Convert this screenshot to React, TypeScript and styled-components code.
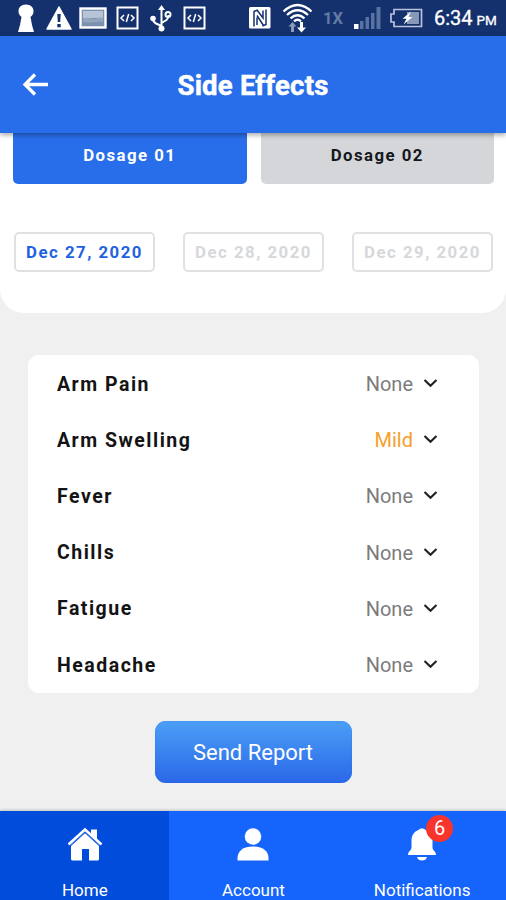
import React from "react";
import styled, { createGlobalStyle } from "styled-components";

const GlobalStyle = createGlobalStyle`
  * { box-sizing: border-box; }
  body { margin: 0; background: #f0f0f0; }
  button { font: inherit; border: 0; padding: 0; margin: 0; cursor: pointer; }
`;

const Screen = styled.div`
  width: 506px;
  height: 900px;
  overflow: hidden;
  display: flex;
  flex-direction: column;
  background: #f0f0f0;
  font-family: Roboto, "Liberation Sans", sans-serif;
`;

const StatusBar = styled.div`
  flex: none;
  height: 36px;
  background: #14316d;
  color: #fff;
  display: flex;
  justify-content: space-between;
  padding: 0 10px 0 16px;
`;

const StatusGroup = styled.div`
  display: flex;
  align-items: center;
  height: 36px;
`;

const StatusIcon = styled.svg<{ $gap?: number }>`
  display: block;
  flex: none;
  margin-right: ${(p) => p.$gap ?? 0}px;
`;

const Network = styled.span`
  width: 31px;
  font-size: 16.5px;
  font-weight: 700;
  color: #647aa3;
`;

const Clock = styled.span`
  width: 62px;
  font-size: 20px;
  line-height: 36px;
  white-space: nowrap;
  padding-top: 2px;
  -webkit-text-stroke: 0.3px #fff;
`;

const Meridiem = styled.small`
  font-size: 13.5px;
  margin-left: 4px;
`;

const Header = styled.header`
  flex: none;
  position: relative;
  z-index: 1;
  height: 97px;
  background: #286eeb;
  box-shadow: 0 2px 5px rgba(0, 0, 0, 0.35);
  display: grid;
  grid-template-columns: 72px 1fr 72px;
  align-items: center;
`;

const BackButton = styled.button`
  background: none;
  color: #fff;
  display: flex;
  padding-left: 22px;
`;

const Title = styled.h1`
  margin: 2px 0 0;
  color: #fff;
  text-align: center;
  font-size: 27.5px;
  line-height: 32px;
  font-weight: 700;
  letter-spacing: 0.2px;
  -webkit-text-stroke: 0.5px #fff;
`;

const Panel = styled.section`
  flex: none;
  height: 180px;
  background: #fff;
  border-radius: 0 0 24px 24px;
  padding: 0 12px 0 13px;
`;

const Tabs = styled.div`
  display: grid;
  grid-template-columns: 1fr 1fr;
  gap: 14px;
`;

const Tab = styled.button<{ $active?: boolean }>`
  height: 51px;
  padding-bottom: 8px;
  border-radius: 0 0 5px 5px;
  background: ${(p) => (p.$active ? "#286eeb" : "#d4d6d9")};
  color: ${(p) => (p.$active ? "#fff" : "#15171b")};
  font-size: 16.8px;
  font-weight: 700;
  letter-spacing: 1.45px;
`;

const Dates = styled.div`
  display: flex;
  justify-content: space-between;
  margin: 48px 1px 0;
`;

const DateChip = styled.button<{ $active?: boolean }>`
  width: 141px;
  height: 40px;
  background: #fff;
  border: 2px solid #e0e1e3;
  border-radius: 5px;
  color: ${(p) => (p.$active ? "#1f62e0" : "#d6d8db")};
  font-size: 16.8px;
  font-weight: 700;
  letter-spacing: 1.5px;
  white-space: nowrap;
`;

const Card = styled.section`
  flex: none;
  margin: 42px 27px 0 28px;
  height: 338px;
  background: #fff;
  border-radius: 11px;
  padding: 1px 41px 0 29px;
`;

const Row = styled.div`
  height: 56.2px;
  display: flex;
  align-items: center;
  justify-content: space-between;
`;

const Symptom = styled.span`
  font-size: 19.5px;
  font-weight: 700;
  letter-spacing: 1.5px;
  color: #141414;
`;

const Severity = styled.button<{ $mild?: boolean }>`
  display: flex;
  align-items: center;
  gap: 10px;
  background: none;
  font-size: 20px;
  color: ${(p) => (p.$mild ? "#f5a02c" : "#7c7c7c")};
`;

const SendButton = styled.button`
  flex: none;
  align-self: center;
  width: 197px;
  height: 62px;
  margin-top: 28px;
  border-radius: 11px;
  background: linear-gradient(#4b9ff6, #2a67e8);
  color: #fff;
  font-size: 22px;
  box-shadow: inset 0 0 1px #1c68ea;
`;

const BottomNav = styled.nav`
  flex: none;
  height: 89px;
  margin-top: auto;
  display: grid;
  grid-template-columns: repeat(3, 1fr);
  box-shadow: 0 -1px 3px rgba(0, 0, 0, 0.2);
`;

const NavItem = styled.button<{ $active?: boolean }>`
  background: ${(p) => (p.$active ? "#024cdb" : "#1564fc")};
  color: #fff;
  display: flex;
  flex-direction: column;
  align-items: center;
  padding: 15px 0 0 1px;
  font-size: 17px;
`;

const NavIcon = styled.div`
  position: relative;
  width: 38px;
  height: 36px;
  margin-bottom: 18px;
`;

const NavLabel = styled.span`
  line-height: 20px;
`;

const Badge = styled.span`
  position: absolute;
  left: 23px;
  top: -11px;
  width: 27px;
  height: 27px;
  border-radius: 50%;
  background: #f8352d;
  font-size: 20px;
  line-height: 26px;
  text-align: center;
`;

const CodeIcon = ({ gap }: { gap?: number }) => (
  <StatusIcon width="23" height="24" viewBox="0 0 23 24" fill="none" stroke="#fff" $gap={gap}>
    <rect x="1.5" y="1.5" width="20" height="21" strokeWidth="2" />
    <path d="M8 9L5 12l3 3M15 9l3 3-3 3M12.7 8l-2.4 8" strokeWidth="1.5" />
  </StatusIcon>
);

const Chevron = () => (
  <svg width="15" height="10" viewBox="0 0 15 10" fill="none" stroke="#222" strokeWidth="2.2">
    <path d="M1.5 1l6 5.700 6-5.700" />
  </svg>
);

const symptoms = [
  { name: "Arm Pain", level: "None" },
  { name: "Arm Swelling", level: "Mild" },
  { name: "Fever", level: "None" },
  { name: "Chills", level: "None" },
  { name: "Fatigue", level: "None" },
  { name: "Headache", level: "None" },
];

export default function App() {
  return (
    <>
      <GlobalStyle />
      <Screen>
        <StatusBar>
          <StatusGroup>
            <StatusIcon width="20" height="30" viewBox="0 0 20 30" fill="#fff" $gap={9}>
              <path d="M10 1.500c5 0 7.500 3 7.500 6.500 0 3-1 4-3 6l1.500 8 2 7H2l2-7 1.500-8c-2-2-3-3-3-6 0-3.500 2.500-6.500 7.500-6.500z" />
            </StatusIcon>
            <StatusIcon width="28" height="26" viewBox="0 0 28 26" $gap={6}>
              <path d="M14 2L26 24H2z" fill="#fff" stroke="#fff" strokeWidth="1.500" strokeLinejoin="round" />
              <path d="M12.300 9h3.400l-.5 8h-2.400zM12.300 19h3.400v3.200h-3.400z" fill="#14316d" />
            </StatusIcon>
            <StatusIcon width="28" height="22" viewBox="0 0 28 22" $gap={9}>
              <rect x="1.500" y="1.500" width="25" height="19" fill="#7b91ae" stroke="#fff" strokeWidth="2.400" />
              <rect x="4" y="4" width="20" height="7" fill="#b7c4d6" />
              <path d="M4 12c5-3 8 1 12 0s5-2 8-1v4c-6-1-12 2-20 0z" fill="#93a5bd" />
            </StatusIcon>
            <CodeIcon gap={11} />
            <StatusIcon width="22" height="28" viewBox="0 0 22 28" fill="none" stroke="#fff" strokeWidth="2" $gap={11}>
              <path d="M11.500 5v20M11.500 22L6 19.500Q3 18 3 14M11.500 19l5-3q2-1.500 2-5" />
              <path d="M11.500 1l3.500 5H8z" fill="#fff" stroke="none" />
              <circle cx="3" cy="14.500" r="2.800" fill="#fff" stroke="none" />
              <circle cx="18" cy="10.500" r="2.500" />
              <circle cx="11.500" cy="24.500" r="3" fill="#fff" stroke="none" />
            </StatusIcon>
            <CodeIcon />
          </StatusGroup>
          <StatusGroup>
            <StatusIcon width="22" height="22" viewBox="0 0 22 22" $gap={11}>
              <rect width="21.500" height="21.500" rx="1.500" fill="#fff" />
              <path d="M5 19.500V4.500L8.500 3M17 2.500v15L13.500 19" fill="none" stroke="#14316d" strokeWidth="1.500" />
              <path d="M8 3l6 8V3.500M8 10.500V18M8 8.500l6.500 10" fill="none" stroke="#14316d" strokeWidth="1.500" />
            </StatusIcon>
            <StatusIcon width="31" height="30" viewBox="0 0 31 30" fill="none" stroke="#fff" strokeWidth="2.300" $gap={10}>
              <path d="M1.500 8.500Q15.500-4.500 29.500 8.500M5 12q10.500-9.500 21 0M8.500 15.300q7-6 14 0M12 18.300q3.500-3 7 0" />
              <path d="M10.500 19l4 4.500H12V29H9v-5.500H6.500z" fill="#8c9bb8" stroke="none" />
              <path d="M19.500 29.500l-4.500-5h3V19h3v5.500h3z" fill="#fff" stroke="none" />
            </StatusIcon>
            <Network>1X</Network>
            <StatusIcon width="28" height="22" viewBox="0 0 28 22" fill="#5873a1" $gap={7}>
              <rect x="0" y="17" width="4.500" height="5" fill="#fff" />
              <rect x="6" y="14" width="3.500" height="8" />
              <rect x="11.500" y="10" width="3.500" height="12" />
              <rect x="17" y="6" width="3.500" height="16" />
              <rect x="22.500" y="0" width="4" height="22" />
            </StatusIcon>
            <StatusIcon width="34" height="20" viewBox="0 0 34 20" $gap={11}>
              <path d="M5 1.500h27.500v17H5V14H2V6h3z" fill="none" stroke="#b9c4d9" strokeWidth="1.700" />
              <rect x="18" y="4" width="12" height="12" fill="#8798b8" />
              <path d="M22 3.500l-8.500 7.300h4L14.500 16.500l9-7.500h-4z" fill="#fff" />
            </StatusIcon>
            <Clock>
              6:34<Meridiem>PM</Meridiem>
            </Clock>
          </StatusGroup>
        </StatusBar>
        <Header>
          <BackButton aria-label="Back">
            <svg width="27" height="24" viewBox="0 0 27 24" fill="none" stroke="#fff" strokeWidth="3.300">
              <path d="M26 11.500H4M13 1.500l-10 10 10 10" />
            </svg>
          </BackButton>
          <Title>Side Effects</Title>
        </Header>
        <Panel>
          <Tabs>
            <Tab $active>Dosage 01</Tab>
            <Tab>Dosage 02</Tab>
          </Tabs>
          <Dates>
            <DateChip $active>Dec 27, 2020</DateChip>
            <DateChip>Dec 28, 2020</DateChip>
            <DateChip>Dec 29, 2020</DateChip>
          </Dates>
        </Panel>
        <Card>
          {symptoms.map((s) => (
            <Row key={s.name}>
              <Symptom>{s.name}</Symptom>
              <Severity $mild={s.level === "Mild"}>
                {s.level}
                <Chevron />
              </Severity>
            </Row>
          ))}
        </Card>
        <SendButton>Send Report</SendButton>
        <BottomNav>
          <NavItem $active>
            <NavIcon>
              <svg width="38" height="36" viewBox="0 0 38 36" fill="#fff">
                <path d="M25 3.500h6v11l-6-5.500z" />
                <path d="M19 6.500L33 19v14q0 1.500-1.500 1.500H23V23h-7v11.500H6.500Q5 34.500 5 33V19z" />
                <path d="M2.500 18.500L19 3.500l16.500 15" fill="none" stroke="#fff" strokeWidth="2.600" />
                <path d="M4 20.500L19 6.800l15 13.700" fill="none" stroke="#024cdb" strokeWidth="0.900" />
              </svg>
            </NavIcon>
            <NavLabel>Home</NavLabel>
          </NavItem>
          <NavItem>
            <NavIcon>
              <svg width="38" height="36" viewBox="0 0 38 36" fill="#fff">
                <circle cx="19" cy="10.500" r="8.300" />
                <path d="M3.500 34.500v-2C3.500 25 9 20.500 19 20.500S34.500 25 34.500 32.500v2z" />
              </svg>
            </NavIcon>
            <NavLabel>Account</NavLabel>
          </NavItem>
          <NavItem>
            <NavIcon>
              <svg width="38" height="36" viewBox="0 0 38 36" fill="#fff">
                <path d="M19 2.500c2 0 2.500.5 3.500 1.500 4.500 1.500 7 5.500 7 10.500v7c0 3 3.500 3.500 3.500 7.500H5c0-4 3.500-4.500 3.500-7.500v-7c0-5 2.500-9 7-10.500 1-1 1.500-1.500 3.500-1.500z" />
                <path d="M14 31h10c-.5 2.500-2.500 3.500-5 3.500S14.500 33.500 14 31z" />
              </svg>
              <Badge>6</Badge>
            </NavIcon>
            <NavLabel>Notifications</NavLabel>
          </NavItem>
        </BottomNav>
      </Screen>
    </>
  );
}
